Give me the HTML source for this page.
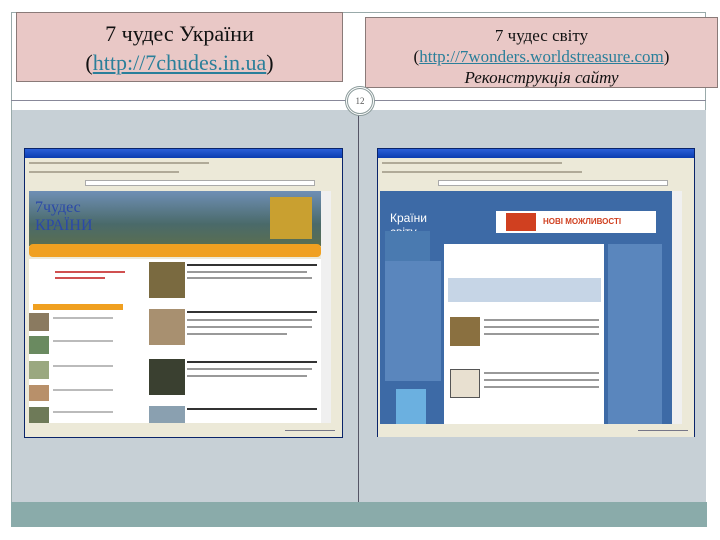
<!DOCTYPE html>
<html><head><meta charset="utf-8"><style>
*{margin:0;padding:0;box-sizing:border-box}
body{width:720px;height:540px;background:#fff;position:relative;overflow:hidden;font-family:"Liberation Serif",serif}
.a{position:absolute}
.hdr{background:#e9c8c6;border:1px solid #8a7a78;text-align:center;color:#111}
.hdr a{color:#2a7f9a;text-decoration:underline}
.t{font-family:"Liberation Sans",sans-serif;font-size:4px;color:#555}
.tb{position:absolute;left:3px;height:1px;background:#aaa}
.ln{position:absolute;height:2px;background:#999}
</style></head><body>
<div class="a" style="left:11px;top:12px;width:695px;height:490px;border:1px solid #9aa;border-bottom:none"></div>
<div class="a" style="left:11px;top:100px;width:695px;height:1px;background:#889"></div>
<div class="a" style="left:12px;top:110px;width:694px;height:392px;background:#c7d0d6"></div>
<div class="a" style="left:11px;top:502px;width:696px;height:25px;background:#8aabaa"></div>
<div class="a" style="left:358px;top:110px;width:1px;height:392px;background:#556"></div>
<div class="a hdr" style="left:16px;top:12px;width:327px;height:70px;font-size:22px;line-height:29px;padding-top:6px">7 чудес України<br>(<a>http://7chudes.in.ua</a>)</div>
<div class="a hdr" style="left:365px;top:17px;width:353px;height:71px;font-size:17px;line-height:21px;padding-top:7px">7 чудес світу<br>(<a>http://7wonders.worldstreasure.com</a>)<br><i>Реконструкція сайту</i></div>
<div class="a" style="left:345px;top:86px;width:30px;height:30px;border-radius:50%;background:#fff;border:3px double #8a9a9a;font-size:9px;text-align:center;line-height:24px;color:#555">12</div>

<!-- left browser -->
<div class="a" style="left:24px;top:148px;width:319px;height:290px;background:#ece9d8;border:1px solid #0a246a">
 <div style="height:9px;background:linear-gradient(#2a5fd8,#0b3cb0)"></div>
 <div class="ln" style="left:4px;top:13px;width:180px;background:#b0aa98"></div>
 <div class="ln" style="left:4px;top:22px;width:150px;background:#b0aa98"></div>
 <div class="a" style="left:60px;top:31px;width:230px;height:6px;background:#fff;border:1px solid #aaa"></div>
 <div class="a" style="left:4px;top:42px;width:292px;height:55px;background:linear-gradient(#6f8fb5,#4a6a6a 60%,#5a6e50)"></div>
 <div class="a" style="left:10px;top:50px;width:90px;height:38px;font-size:16px;color:#2b49a8;font-family:'Liberation Serif',serif;line-height:18px">7чудес<br>КРАЇНИ</div>
 <div class="a" style="left:245px;top:48px;width:42px;height:42px;background:#c9a030"></div>
 <div class="a" style="left:4px;top:95px;width:292px;height:13px;background:#f0a020;border-radius:4px"></div>
 <div class="a" style="left:4px;top:110px;width:292px;height:164px;background:#fff"></div>
 <div class="ln" style="left:30px;top:122px;width:70px;background:#d05050"></div>
 <div class="ln" style="left:30px;top:128px;width:50px;background:#d05050"></div>
 <div class="a" style="left:8px;top:155px;width:90px;height:6px;background:#f0a020"></div>
 <div class="a" style="left:4px;top:164px;width:20px;height:18px;background:#8a7a60"></div>
 <div class="a" style="left:4px;top:187px;width:20px;height:18px;background:#6a8a60"></div>
 <div class="a" style="left:4px;top:212px;width:20px;height:18px;background:#9aa880"></div>
 <div class="a" style="left:4px;top:236px;width:20px;height:16px;background:#b8906a"></div>
 <div class="a" style="left:4px;top:258px;width:20px;height:16px;background:#6e7a58"></div>
 <div class="ln" style="left:28px;top:168px;width:60px;background:#bbb"></div>
 <div class="ln" style="left:28px;top:191px;width:60px;background:#bbb"></div>
 <div class="ln" style="left:28px;top:216px;width:60px;background:#bbb"></div>
 <div class="ln" style="left:28px;top:240px;width:60px;background:#bbb"></div>
 <div class="ln" style="left:28px;top:262px;width:60px;background:#bbb"></div>
 <div class="a" style="left:124px;top:113px;width:36px;height:36px;background:#7a6a40"></div>
 <div class="a" style="left:124px;top:160px;width:36px;height:36px;background:#a89070"></div>
 <div class="a" style="left:124px;top:210px;width:36px;height:36px;background:#3a4030"></div>
 <div class="a" style="left:124px;top:257px;width:36px;height:17px;background:#8aa0b0"></div>
 <div class="ln" style="left:162px;top:115px;width:130px;background:#333"></div>
 <div class="ln" style="left:162px;top:122px;width:120px;background:#999"></div>
 <div class="ln" style="left:162px;top:128px;width:125px;background:#999"></div>
 <div class="ln" style="left:162px;top:162px;width:130px;background:#333"></div>
 <div class="ln" style="left:162px;top:170px;width:125px;background:#999"></div>
 <div class="ln" style="left:162px;top:177px;width:125px;background:#999"></div>
 <div class="ln" style="left:162px;top:184px;width:100px;background:#999"></div>
 <div class="ln" style="left:162px;top:212px;width:130px;background:#333"></div>
 <div class="ln" style="left:162px;top:219px;width:125px;background:#999"></div>
 <div class="ln" style="left:162px;top:226px;width:120px;background:#999"></div>
 <div class="ln" style="left:162px;top:259px;width:130px;background:#333"></div>
 <div class="a" style="left:296px;top:42px;width:10px;height:232px;background:#f0f0f0"></div>
 <div class="a" style="left:0;top:276px;width:317px;height:12px;background:#ece9d8"></div>
 <div class="a" style="left:260px;top:281px;width:50px;height:1px;background:#778"></div>
</div>

<!-- right browser -->
<div class="a" style="left:377px;top:148px;width:318px;height:289px;background:#ece9d8;border:1px solid #0a246a">
 <div style="height:9px;background:linear-gradient(#2a5fd8,#0b3cb0)"></div>
 <div class="ln" style="left:4px;top:13px;width:180px;background:#b0aa98"></div>
 <div class="ln" style="left:4px;top:22px;width:200px;background:#b0aa98"></div>
 <div class="a" style="left:60px;top:31px;width:230px;height:6px;background:#fff;border:1px solid #aaa"></div>
 <div class="a" style="left:2px;top:42px;width:292px;height:233px;background:#3d6aa6"></div>
 <div class="a" style="left:12px;top:62px;width:52px;height:22px;color:#fff;font-size:12px;font-family:'Liberation Sans',sans-serif">Країни світу</div>
 <div class="a" style="left:118px;top:62px;width:160px;height:22px;background:#fff"></div>
 <div class="a" style="left:128px;top:64px;width:30px;height:18px;background:#d04020"></div>
 <div class="a" style="left:165px;top:68px;font-size:8px;color:#d04020;font-weight:bold;font-family:'Liberation Sans',sans-serif">НОВІ МОЖЛИВОСТІ</div>
 <div class="a" style="left:66px;top:95px;width:160px;height:180px;background:#fff"></div>
 <div class="a" style="left:70px;top:129px;width:153px;height:24px;background:#c6d5e6"></div>
 <div class="a" style="left:72px;top:168px;width:30px;height:29px;background:#8a7040"></div>
 <div class="a" style="left:72px;top:220px;width:30px;height:29px;background:#e8e0d0;border:1px solid #555"></div>
 <div class="ln" style="left:106px;top:170px;width:115px;background:#999"></div>
 <div class="ln" style="left:106px;top:177px;width:115px;background:#999"></div>
 <div class="ln" style="left:106px;top:184px;width:115px;background:#999"></div>
 <div class="ln" style="left:106px;top:223px;width:115px;background:#999"></div>
 <div class="ln" style="left:106px;top:230px;width:115px;background:#999"></div>
 <div class="ln" style="left:106px;top:237px;width:115px;background:#999"></div>
 <div class="a" style="left:7px;top:82px;width:45px;height:30px;background:#4a7ab0"></div>
 <div class="a" style="left:7px;top:112px;width:56px;height:120px;background:#5a86bd"></div>
 <div class="a" style="left:18px;top:240px;width:30px;height:35px;background:#6bb0e0"></div>
 <div class="a" style="left:230px;top:95px;width:54px;height:180px;background:#5a86bd"></div>
 <div class="a" style="left:294px;top:42px;width:10px;height:233px;background:#f0f0f0"></div>
 <div class="a" style="left:0;top:276px;width:316px;height:12px;background:#ece9d8"></div>
 <div class="a" style="left:260px;top:281px;width:50px;height:1px;background:#778"></div>
</div>
</body></html>
